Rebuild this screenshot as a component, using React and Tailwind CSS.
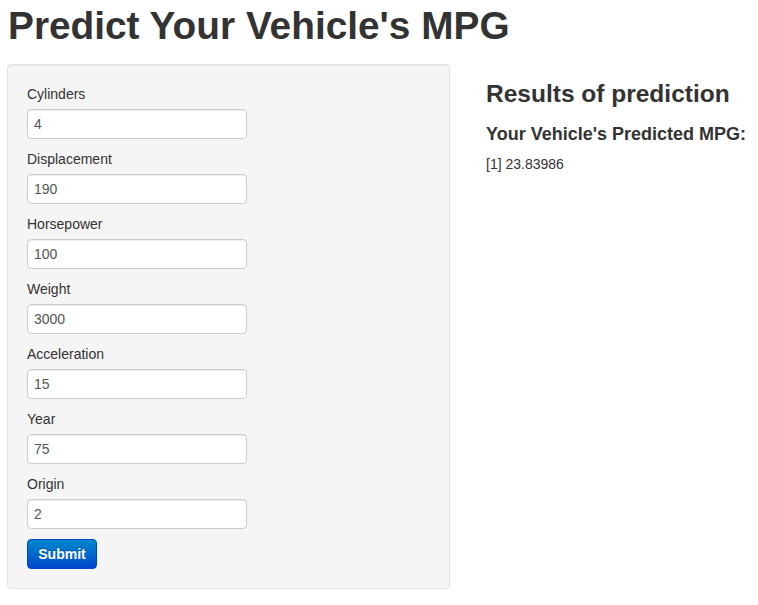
const fields = [
  ["Cylinders", "4"],
  ["Displacement", "190"],
  ["Horsepower", "100"],
  ["Weight", "3000"],
  ["Acceleration", "15"],
  ["Year", "75"],
  ["Origin", "2"],
];

export default function App() {
  return (
    <div className="min-h-[605px] bg-white px-[7px] text-[#333] font-['Liberation_Sans',Arial,sans-serif] text-[14px] leading-5">
      {/* Header */}
      <h1 className="mt-[6px] mb-[18px] pl-[1px] text-[38.8px] leading-[40px] font-bold">
        Predict Your Vehicle&apos;s MPG
      </h1>

      <div className="flex items-start">
        {/* Sidebar inputs */}
        <form
          className="w-[443px] shrink-0 rounded-[4px] border border-[#e3e3e3] bg-[#f5f5f5] p-[19px] shadow-[inset_0_1px_1px_rgba(0,0,0,0.05)]"
          onSubmit={(e) => e.preventDefault()}
        >
          {fields.map(([label, value]) => (
            <div key={label}>
              <label className="mb-[5px] block">{label}</label>
              <input
                type="text"
                defaultValue={value}
                className="mb-[10px] block h-[30px] w-[220px] rounded-[4px] border border-[#ccc] bg-white px-[6px] py-[4px] text-[14px] leading-5 text-[#555] shadow-[inset_0_1px_1px_rgba(0,0,0,0.075)] outline-none"
              />
            </div>
          ))}
          <button
            type="submit"
            className="h-[30px] w-[70px] rounded-[4px] border border-[#0044cc] bg-gradient-to-b from-[#0088cc] to-[#0044cc] text-[14px] font-bold leading-5 text-white [text-shadow:0_-1px_0_rgba(0,0,0,0.25)]"
          >
            Submit
          </button>
        </form>

        {/* Main panel */}
        <div className="ml-[36px]">
          <h3 className="mt-[10px] text-[24.5px] leading-[40px] font-bold">Results of prediction</h3>
          <h4 className="mt-[10px] text-[18px] leading-5 font-bold">Your Vehicle&apos;s Predicted MPG:</h4>
          <div className="mt-[10px]">[1] 23.83986</div>
        </div>
      </div>
    </div>
  );
}
